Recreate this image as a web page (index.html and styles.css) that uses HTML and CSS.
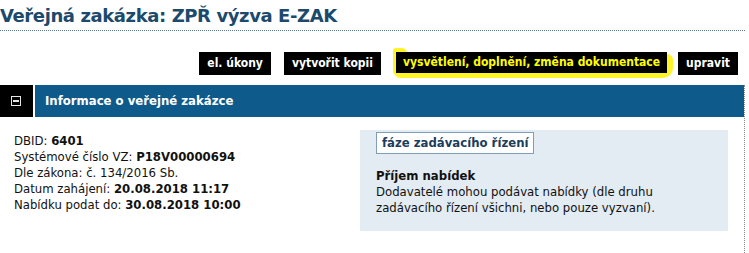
FILE: index.html
```html
<!DOCTYPE html>
<html lang="cs">
<head>
    <meta charset="UTF-8">
    <title>Veřejná zakázka: ZPŘ výzva E-ZAK</title>
    <link rel="stylesheet" href="styles.css">
</head>
<body>
    <div class="page">
        <h1 class="title">Veřejná zakázka: ZPŘ výzva E-ZAK</h1>

        <div class="actions">
            <a class="btn" href="#">el. úkony</a>
            <a class="btn" href="#">vytvořit kopii</a>
            <a class="btn btn-marked" href="#">vysvětlení, doplnění, změna dokumentace</a>
            <a class="btn" href="#">upravit</a>
        </div>

        <section class="box">
            <div class="box-head">
                <span class="toggle"><span class="toggle-icon"></span></span>
                <h2 class="box-title">Informace o veřejné zakázce</h2>
            </div>
            <div class="box-body">
                <ul class="facts">
                    <li>DBID: <b>6401</b></li>
                    <li>Systémové číslo VZ: <b>P18V00000694</b></li>
                    <li>Dle zákona: č. 134/2016 Sb.</li>
                    <li>Datum zahájení: <b>20.08.2018 11:17</b></li>
                    <li>Nabídku podat do: <b>30.08.2018 10:00</b></li>
                </ul>
                <div class="phase">
                    <span class="phase-label">fáze zadávacího řízení</span>
                    <h3 class="phase-name">Příjem nabídek</h3>
                    <p class="phase-text">Dodavatelé mohou podávat nabídky (dle druhu zadávacího řízení všichni, nebo pouze vyzvaní).</p>
                </div>
            </div>
        </section>
    </div>
</body>
</html>
```

FILE: styles.css
```css
/* General */
body {
    margin: 0;
    padding: 0;
    background-color: #ffffff;
    color: #111;
    font-family: "DejaVu Sans", Verdana, sans-serif;
    font-stretch: condensed;
    font-size: 13px;
}

.page {
    width: 745px;
}

.title {
    margin: 0;
    padding: 5px 0 3px 0;
    font-size: 18px;
    font-stretch: normal;
    letter-spacing: -0.4px;
    line-height: 22px;
    color: #1b4a6c;
    border-bottom: 1px dotted #5d7d94;
}

/* Action buttons */
.actions {
    display: flex;
    justify-content: flex-end;
    gap: 13px;
    padding: 21px 7px 0 0;
    height: 23px;
}

.btn {
    display: block;
    background-color: #000;
    color: #fff;
    font-size: 12px;
    font-weight: bold;
    text-decoration: none;
    padding: 0 8px;
    line-height: 23px;
}

.btn-marked {
    position: relative;
    color: #ffff00;
    height: 21px;
    line-height: 21px;
    padding: 0 7px;
    margin-left: 2px;
    margin-right: -2px;
}

/* highlighter mark around the button */
.btn-marked::before {
    content: "";
    position: absolute;
    left: -3px;
    top: 2px;
    right: -6px;
    bottom: -5px;
    background-color: #fff32a;
    border-radius: 2px 6px 10px 8px;
    z-index: -1;
}

.btn-marked::after {
    content: "";
    position: absolute;
    left: -3px;
    top: -4px;
    width: 14px;
    height: 8px;
    background-color: #fff32a;
    border-radius: 3px 5px 0 0;
    z-index: -1;
}

/* Info box */
.box {
    margin-top: 10px;
    border-right: 1px dotted #888;
    height: 168px;
}

.box-head {
    display: flex;
    gap: 2px;
    height: 32px;
}

.toggle {
    width: 33px;
    background-color: #000;
    display: flex;
    align-items: center;
    justify-content: center;
}

.toggle-icon {
    position: relative;
    width: 8px;
    height: 8px;
    border: 1px solid #e6e6e6;
    margin-left: -1px;
}

.toggle-icon::after {
    content: "";
    position: absolute;
    left: 1px;
    right: 1px;
    top: 3px;
    height: 2px;
    background-color: #e6e6e6;
}

.box-title {
    flex: 1;
    margin: 0;
    padding-left: 10px;
    background-color: #0e5b8b;
    color: #fff;
    font-size: 13px;
    line-height: 32px;
}

.box-body {
    display: flex;
    justify-content: space-between;
    padding: 13px 16px 0 14px;
}

.facts {
    list-style: none;
    margin: 0;
    padding: 3px 0 0 0;
    line-height: 16px;
}

.phase {
    width: 336px;
    background-color: #e3ebf3;
    padding: 2px 16px 15px 16px;
    line-height: 16px;
}

.phase-label {
    display: inline-block;
    background-color: #fff;
    border: 1px solid #7f9db6;
    color: #1c3d5c;
    font-weight: bold;
    padding: 0 5px;
    line-height: 20px;
}

.phase-name {
    margin: 14px 0 0 0;
    font-size: 13px;
}

.phase-text {
    margin: 0;
}
```
